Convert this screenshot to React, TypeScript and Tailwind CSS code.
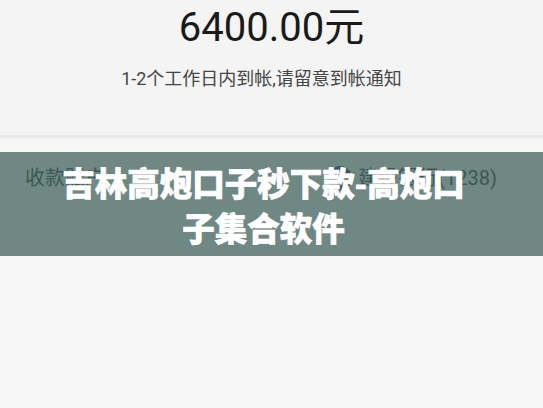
import React from "react";

export default function App() {
  const font = { fontFamily: '"Roboto", "Noto Sans CJK SC", sans-serif' };
  return (
    <div className="relative w-[543px] h-[408px] overflow-hidden bg-[#f4f4f4]" style={font}>
      <div className="flex flex-col items-center h-[135px]">
        <div className="mt-[4px] text-[40px] leading-[48px] text-[#1a1a1a]">6400.00元</div>
        <div className="mt-[15px] mr-[20px] text-[18px] leading-[24px] text-[#454545]">1-2个工作日内到帐,请留意到帐通知</div>
      </div>
      <div className="h-[3px] bg-[#e8e8e8]" />
      <div className="bg-[#f6f6f6] h-[270px]">
        <div className="flex items-center justify-between pl-[25px] pr-[46px] pt-[26px]">
          <span className="text-[20px] leading-[28px] text-[#333333]">收款账户</span>
          <div className="flex items-center gap-[6px]">
            <span className="w-[24px] h-[24px] rounded-full bg-[#0b3a6e] flex items-center justify-center">
              <span className="w-[10px] h-[10px] rounded-full bg-[#f6f6f6]" />
            </span>
            <span className="text-[20px] leading-[28px] text-[#333333]">建设银行(1238)</span>
          </div>
        </div>
      </div>
      <div className="absolute left-0 top-[152px] w-[543px] h-[104px] bg-[#41635c]/75 flex items-center justify-center pl-[52px] pr-[68px]">
        <div
          className="text-center text-white font-black text-[32.5px] leading-[45px] [-webkit-text-stroke:0.7px_#ffffff]"
          style={{ fontFamily: '"Noto Sans CJK SC", sans-serif' }}
        >
          吉林高炮口子秒下款-高炮口子集合软件
        </div>
      </div>
    </div>
  );
}
